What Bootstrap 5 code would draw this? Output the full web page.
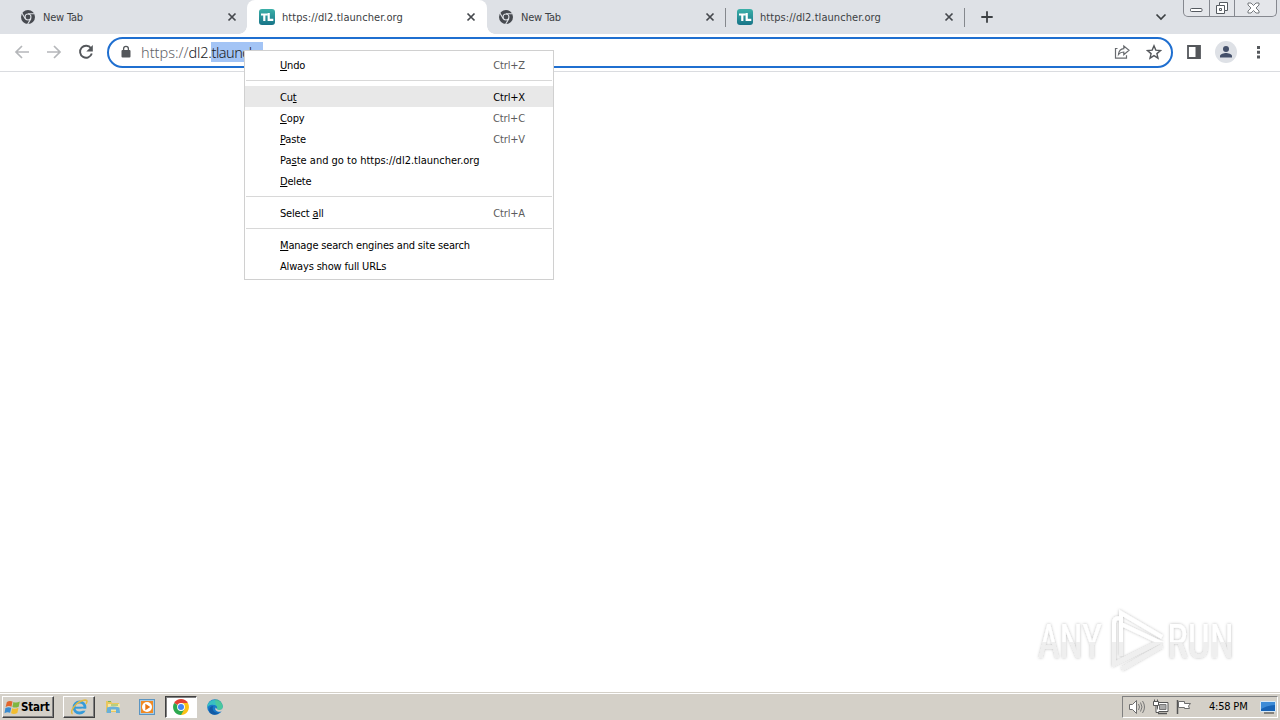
<!DOCTYPE html>
<html lang="en">
<head>
    <meta charset="UTF-8">
    <meta name="viewport" content="width=device-width, initial-scale=1.0">
    <title>https://dl2.tlauncher.org</title>
    <link rel="stylesheet" href="https://cdn.jsdelivr.net/npm/bootstrap@5.3.0/dist/css/bootstrap.min.css">
    <style>
        body {
            font-family: "DejaVu Sans Condensed", "DejaVu Sans", sans-serif;
            font-stretch: condensed;
            font-size: 11px;
            line-height: 14px;
            color: #202124;
        }
        svg { display: block; flex: none; }

        /* tab strip */
        .tabstrip { height: 34px; background: #dee1e6; padding-left: 8px; }
        .tab-item { width: 239px; height: 34px; padding: 0 9px 0 12px; color: #3c4043; flex: none; }
        .tab-item.wide { width: 240px; padding-right: 10px; }
        .tab-item.narrow { width: 238px; padding: 0 9px 0 11px; }
        .tab-item .tab-title { margin-left: 7px; padding-top: 2px; letter-spacing: -.2px; }
        .tab-item .tab-url { letter-spacing: .06px; }
        .tab-item.current { background: #fff; border-radius: 8px 8px 0 0; position: relative; }
        .tab-item.current::before, .tab-item.current::after {
            content: ""; position: absolute; bottom: 0; width: 8px; height: 8px;
        }
        .tab-item.current::before { left: -8px; background: radial-gradient(circle at 0 0, transparent 7.5px, #fff 8px); }
        .tab-item.current::after { right: -8px; background: radial-gradient(circle at 100% 0, transparent 7.5px, #fff 8px); }
        .tab-line { width: 1px; height: 19px; background: #85888d; }
        .win-buttons { width: 94px; height: 17px; border: 1px solid #85888f; border-top: 0; border-radius: 0 0 5px 5px; background: #e4e6ea; margin-right: 3px; }
        .win-buttons > div + div { border-left: 1px solid #85888f; }
        .win-min, .win-max { width: 25px; }

        /* toolbar */
        .toolbar { height: 38px; border-bottom: 1px solid #dadce0; padding: 0 13px 2px 13px; }
        .nav-gap { margin-left: 14px; }
        .omnibox { height: 31px; border: 2px solid #1f6fd0; border-radius: 16px; margin: 2px 0 0 12px; padding: 0 9px 2px 10px; width: 1066px; }
        .url { font-family: "Noto Sans", sans-serif; font-stretch: normal; font-weight: 300; font-size: 14.5px; line-height: 20px; margin-left: 8px; color: #5f6368; }
        .url-host { color: #202124; letter-spacing: -.25px; }
        .url-sel { width: 52px; height: 20px; background: #a3c4f5; color: #202124; letter-spacing: -.5px; }
        .avatar { width: 22px; height: 22px; background: #dee1e6; }

        /* context menu */
        .ctx { position: absolute; left: 244px; top: 50px; width: 310px; border: 1px solid #d0d0d0; background: #fff; padding: 3px 0; color: #000; }
        .ctx-row { height: 21px; padding: 2px 28px 0 35px; }
        .ctx-row kbd { all: unset; color: #5c5c5c; letter-spacing: -.15px; }
        .ctx-row span { letter-spacing: -.17px; }
        .ctx-row .ctx-url { letter-spacing: 0; }
        .ctx-row.hot { background: #e8e8e8; }
        .ctx-row.hot kbd { color: #000; }
        .ctx-line { height: 1px; background: #d8d8d8; margin: 5px 1px; }
        .ctx u { text-underline-offset: 1px; text-decoration-thickness: 1px; }

        .watermark { position: absolute; left: 1030px; top: 602px; }
        .watermark text { font-family: Roboto, "Liberation Sans", sans-serif; font-size: 49px; font-weight: 400; }

        /* taskbar */
        .taskbar { height: 28px; background: #d4d0c8; border-top: 1px solid #d4d0c8; box-shadow: inset 0 1px 0 #fff; padding: 2px 2px 2px 2px; }
        .raised { border: 1px solid; border-color: #fff #404040 #404040 #fff; box-shadow: inset -1px -1px 0 #808080; }
        .pressed { border: 1px solid; border-color: #404040 #fff #fff #404040; box-shadow: inset 1px 1px 0 #808080; background: #fff; }
        .start-btn { width: 52px; height: 22px; padding-left: 1px; font-size: 11.5px; color: #000; letter-spacing: -.2px; }
        .task-btn { width: 32px; height: 22px; }
        .tray { width: 156px; height: 22px; border: 1px solid; border-color: #808080 #fff #fff #808080; padding: 0 1px 0 5px; color: #000; }
        .clock { letter-spacing: -.2px; margin-left: 17px; }
    </style>
</head>
<body class="bg-white overflow-hidden">
    <svg width="0" height="0" class="position-absolute">
        <defs>
            <symbol id="chrome-gray" viewBox="0 0 16 16">
                <circle cx="8" cy="8" r="7" fill="#474a50"/>
                <circle cx="8" cy="8" r="3.5" fill="#dee1e6"/>
                <circle cx="8" cy="8" r="2.4" fill="#474a50"/>
                <path d="M8 4.7h6.6M5.1 9.6 1.9 4M10.9 9.6 7.6 15.2" stroke="#dee1e6" stroke-width="1.1"/>
            </symbol>
            <linearGradient id="teal" x2="0" y2="1"><stop stop-color="#3bb0a8"/><stop offset="1" stop-color="#177488"/></linearGradient>
            <symbol id="tl" viewBox="0 0 16 16">
                <rect width="16" height="16" rx="3" fill="url(#teal)"/>
                <path d="M2 5.5h6.5M5.3 5v7M9.7 4v6.8h4.6" fill="none" stroke="#fff" stroke-width="2.2"/>
            </symbol>
            <symbol id="close" viewBox="0 0 10 10">
                <path d="m1.500 1.500 7 7m0-7-7 7" stroke="#45484d" stroke-width="1.700"/>
            </symbol>
        </defs>
    </svg>

    <div class="vh-100 d-flex flex-column">
        <div class="tabstrip d-flex align-items-center">
            <div class="tab-item d-flex align-items-center">
                <svg width="16" height="16"><use href="#chrome-gray"/></svg>
                <span class="tab-title">New Tab</span>
                <svg class="ms-auto" width="12" height="10"><use href="#close"/></svg>
            </div>
            <div class="tab-item wide current d-flex align-items-center">
                <svg width="16" height="16"><use href="#tl"/></svg>
                <span class="tab-title tab-url">https://dl2.tlauncher.org</span>
                <svg class="ms-auto" width="12" height="10"><use href="#close"/></svg>
            </div>
            <div class="tab-item narrow d-flex align-items-center">
                <svg width="16" height="16"><use href="#chrome-gray"/></svg>
                <span class="tab-title">New Tab</span>
                <svg class="ms-auto" width="12" height="10"><use href="#close"/></svg>
            </div>
            <div class="tab-line"></div>
            <div class="tab-item narrow d-flex align-items-center">
                <svg width="16" height="16"><use href="#tl"/></svg>
                <span class="tab-title tab-url">https://dl2.tlauncher.org</span>
                <svg class="ms-auto" width="12" height="10"><use href="#close"/></svg>
            </div>
            <div class="tab-line"></div>
            <svg class="ms-3" width="12" height="12" viewBox="0 0 12 12"><path d="M6 .3v11.4M.3 6h11.4" stroke="#3c4043" stroke-width="1.8"/></svg>
            <svg class="ms-auto me-3" width="12" height="8" viewBox="0 0 12 8"><path d="m1.500 1.500 4.500 4.500 4.500-4.500" fill="none" stroke="#3c4043" stroke-width="1.700"/></svg>
            <div class="win-buttons d-flex align-self-start">
                <div class="win-min d-flex justify-content-center align-items-end pb-1">
                    <svg width="13" height="4" viewBox="0 0 13 4"><rect x=".5" y=".5" width="11.5" height="3" rx="1" fill="#fff" stroke="#555a60"/></svg>
                </div>
                <div class="win-max d-flex justify-content-center align-items-center">
                    <svg width="14" height="14" viewBox="0 0 14 14"><path d="M4.500 1.500h8v8h-3v3h-8v-8h3z" fill="#fff" stroke="#555a60"/><path d="M4.500 4.500h5v5M4.500 7.500h2v2h-2z" fill="none" stroke="#555a60"/></svg>
                </div>
                <div class="flex-grow-1 d-flex justify-content-center align-items-center pe-1">
                    <svg width="13" height="12" viewBox="0 0 13 12"><path d="M1 1h3l2.500 2.500L9 1h3v2L9 6l3 3v2H9L6.500 8.500 4 11H1V9l3-3-3-3z" fill="#fff" stroke="#666b70" stroke-width=".9"/></svg>
                </div>
            </div>
        </div>

        <div class="toolbar d-flex align-items-center">
            <svg width="18" height="16" viewBox="0 0 18 16"><path d="M16 8H3m6-6L3 8l6 6" fill="none" stroke="#b5b7ba" stroke-width="1.700"/></svg>
            <svg class="nav-gap" width="18" height="16" viewBox="0 0 18 16"><path d="M2 8h13M9 2l6 6-6 6" fill="none" stroke="#b5b7ba" stroke-width="1.700"/></svg>
            <svg class="nav-gap" width="18" height="16" viewBox="0 0 18 16"><path d="M14 4.300A6 6 0 1 0 14.800 9.500" fill="none" stroke="#54575b" stroke-width="1.900"/><path d="M15.800 1v6.500H9.300z" fill="#54575b"/></svg>
            <div class="omnibox d-flex align-items-center">
                <svg width="14" height="14" viewBox="0 0 14 14"><rect x="2.500" y="5" width="9" height="7.500" rx="1" fill="#54575b"/><path d="M4.600 5.500V3.800a2.400 2.400 0 0 1 4.800 0v1.700" fill="none" stroke="#54575b" stroke-width="1.300"/></svg>
                <div class="url d-flex">
                    <span>https://</span><span class="url-host">dl2.</span><span class="url-sel">tlaunche</span>
                </div>
                <svg class="ms-auto" width="16" height="16" viewBox="0 0 16 16"><path d="M3.500 4.500h-2v9.700h11v-3" fill="none" stroke="#686b6f" stroke-width="1.200"/><path d="M9.800 2v2.700C6.500 5 4.800 7.500 4.500 10.500 6 8.500 7.500 8 9.800 8v2.700L15 6.300z" fill="none" stroke="#686b6f" stroke-width="1.200"/></svg>
                <svg class="ms-3" width="16" height="16" viewBox="0 0 16 16"><path d="m8 1.800 1.800 4.300 4.700.4-3.600 3.100 1.100 4.600L8 11.700l-4 2.500 1.100-4.600-3.600-3.100 4.700-.4z" fill="none" stroke="#54575b" stroke-width="1.400"/></svg>
            </div>
            <svg class="nav-gap" width="14" height="14" viewBox="0 0 14 14"><path d="M1 1h12v12H1z" fill="#fff" stroke="#54575b" stroke-width="1.800"/><path d="M8.500 1H13v12H8.500z" fill="#54575b"/></svg>
            <div class="avatar nav-gap rounded-circle d-flex justify-content-center align-items-center">
                <svg width="14" height="14" viewBox="0 0 14 14"><circle cx="7" cy="4" r="3" fill="#44506a"/><path d="M1 12.500V11c0-2 4-3 6-3s6 1 6 3v1.500z" fill="#44506a"/></svg>
            </div>
            <svg class="ms-auto" width="18" height="16" viewBox="0 0 18 16"><path d="M8 2h3v3H8zM8 6.700h3v3H8zM8 11.400h3v3H8z" fill="#54575b"/></svg>
        </div>

        <div class="flex-grow-1"></div>

        <div class="taskbar d-flex align-items-center">
            <div class="start-btn raised d-flex align-items-center fw-bold">
                <svg width="17" height="18" viewBox="0 0 15 16"><path d="M2.500 3.500Q5 2 7.500 3.200L6.600 7.700Q4 6.500 1.400 8z" fill="#e2652b"/><path d="M8.300 3.500q2.500 1.200 5.700-.3L13 7.700q-3 1.500-5.600.3z" fill="#7fb640"/><path d="M1.200 8.900q2.600-1.400 5.200-.3l-1 4.600q-2.500-1.200-5 .3z" fill="#398bd0"/><path d="M7.200 9q2.700 1.200 5.600-.3l-1 4.700q-3 1.400-5.600.2z" fill="#f2bd30"/></svg>
                <span>Start</span>
            </div>
            <div class="task-btn raised d-flex justify-content-center align-items-center" style="margin-left: 9px">
                <svg width="18" height="18" viewBox="0 0 18 18"><circle cx="9.500" cy="9.500" r="5.500" fill="none" stroke="#369bd9" stroke-width="2.800"/><path d="M5 9.700h9.500" stroke="#369bd9" stroke-width="2"/><path d="M11.500 11.700h5" stroke="#d4d0c8" stroke-width="2"/><path d="M2.500 16C-1 14 6 3 15 2c3 0 2 2 1 4" fill="none" stroke="#e3ba42" stroke-width="1.500"/></svg>
            </div>
            <svg style="margin-left: 10px" width="16" height="16" viewBox="0 0 16 16"><path d="M1 2h5l1 2h7v9H1z" fill="#e9c75e"/><path d="M3 5h12v7H3z" fill="#f7e7a5"/><path d="M2 8.500q6-2 12.500 0L15 14h-4v-3.500H6V14H1.500z" fill="#68b0d9"/><path d="M3 2.500h3M6 6h7" stroke="#76b65a"/></svg>
            <svg style="margin-left: 18px" width="16" height="16" viewBox="0 0 16 16"><rect x=".5" y=".5" width="15" height="15" fill="#a7cbe5" stroke="#5b95c2"/><rect x="2" y="2" width="12" height="12" fill="#f08a24"/><circle cx="8" cy="8" r="5" fill="#fff"/><path d="m6.300 4.800 5 3.200-5 3.200z" fill="#e87513"/></svg>
            <div class="task-btn pressed d-flex justify-content-center align-items-center" style="margin-left: 10px">
                <svg width="16" height="16" viewBox="0 0 16 16"><path d="M8 8 1.100 4A8 8 0 0 1 14.900 4z" fill="#e34133"/><path d="M8 8V4h6.900A8 8 0 0 1 8 16z" fill="#fbc116"/><path d="m8 8 3.500 2L8 16A8 8 0 0 1 1.100 4z" fill="#2da94f"/><circle cx="8" cy="8" r="3.900" fill="#fff"/><circle cx="8" cy="8" r="3" fill="#4285f4"/></svg>
            </div>
            <svg style="margin-left: 10px" width="16" height="16" viewBox="0 0 16 16"><circle cx="8" cy="8" r="7.800" fill="#1879c9"/><path d="M.5 6A8 8 0 0 1 15.800 8c0 3-4 4-6 2 1-1.500 0-4-3-4C4 5.500 1.500 6 .3 9z" fill="#38bfc2"/><path d="M8 .2c5 0 8 4 7.800 7.800 0 3-4 4-6 2 1-1.500 0-3-1-4z" fill="#55cc8a" opacity=".65"/><path d="M6.500 7C4.500 9 6 14 12 13.800 9 17 4 16 2.500 13 1.500 10 3 7 6.500 7z" fill="#125aa5"/><path d="M9.800 10c2 2 6 .8 6-2l.2 3c-1 2-5 2.500-7 .5-1-1-.8-2-.2-3z" fill="#d4d0c8"/></svg>

            <div class="tray ms-auto d-flex align-items-center">
                <svg width="18" height="16" viewBox="0 0 18 16"><path d="M1.500 5.500h3l4-4v13l-4-4h-3z" fill="#fff" stroke="#6d6d6d"/><path d="M10.500 5q2 3 0 6M12.500 3.500q3 4.500 0 9M14.500 2q4 6 0 12" fill="none" stroke="#777"/></svg>
                <svg style="margin-left: 6px" width="17" height="16" viewBox="0 0 17 16"><path d="M5.500 3.500h10.500v9H5.500z" fill="#fff" stroke="#555"/><path d="M7.500 5.500h6.500v5H7.500z" fill="#aaa" stroke="#777"/><path d="M6 14.500h9" stroke="#555" stroke-width="1.500"/><path d="M1.500 2.500h5v4h-5zM2.500.5v2m3-2v2M4 7v6.500h3" fill="#fff" stroke="#555"/></svg>
                <svg style="margin-left: 7px" width="16" height="16" viewBox="0 0 16 16"><path d="M1.500 1v14" stroke="#555" stroke-width="1.500"/><path d="M2.500 2.500h6v2h6l-2 2.500 1 2.500h-5v-1h-6z" fill="#fff" stroke="#6d6d6d"/></svg>
                <span class="clock">4:58 PM</span>
                <svg class="ms-auto" width="16" height="14" viewBox="0 0 16 14"><path d="M.5 1.500h15v10H.5z" fill="#1763b6" stroke="#d7e8f5"/><path d="M1 2h14v3q-7 0-14 4z" fill="#3c8bd7"/><path d="M4 13h10" stroke="#333"/></svg>
            </div>
        </div>
    </div>

    <div class="watermark">
        <svg width="240" height="76" viewBox="0 0 240 76">
            <defs>
                <linearGradient id="wm" gradientUnits="userSpaceOnUse" x1="0" y1="0" x2="0" y2="76">
                    <stop offset=".52" stop-color="#fff"/><stop offset=".52" stop-color="#efefef"/>
                </linearGradient>
                <filter id="wm-glow" x="-10%" y="-20%" width="120%" height="140%"><feDropShadow dx="0" dy="0" stdDeviation="1.500" flood-color="#000" flood-opacity=".28"/></filter>
            </defs>
            <g filter="url(#wm-glow)" fill="url(#wm)">
                <text x="8" y="56" textLength="64" lengthAdjust="spacingAndGlyphs">ANY</text>
                <text x="137" y="56" textLength="67" lengthAdjust="spacingAndGlyphs">RUN</text>
                <path d="M91 54V11l41 24M91 22l38 18L84 62V21q0-5 5-5M92 67l40-23" fill="none" stroke="url(#wm)" stroke-width="4"/>
            </g>
        </svg>
    </div>

    <div class="ctx">
        <div class="ctx-row d-flex justify-content-between align-items-center"><span><u>U</u>ndo</span><kbd>Ctrl+Z</kbd></div>
        <div class="ctx-line"></div>
        <div class="ctx-row hot d-flex justify-content-between align-items-center"><span>Cu<u>t</u></span><kbd>Ctrl+X</kbd></div>
        <div class="ctx-row d-flex justify-content-between align-items-center"><span><u>C</u>opy</span><kbd>Ctrl+C</kbd></div>
        <div class="ctx-row d-flex justify-content-between align-items-center"><span><u>P</u>aste</span><kbd>Ctrl+V</kbd></div>
        <div class="ctx-row d-flex align-items-center"><span class="ctx-url">Pa<u>s</u>te and go to https://dl2.tlauncher.org</span></div>
        <div class="ctx-row d-flex align-items-center"><span><u>D</u>elete</span></div>
        <div class="ctx-line"></div>
        <div class="ctx-row d-flex justify-content-between align-items-center"><span>Select <u>a</u>ll</span><kbd>Ctrl+A</kbd></div>
        <div class="ctx-line"></div>
        <div class="ctx-row d-flex align-items-center"><span><u>M</u>anage search engines and site search</span></div>
        <div class="ctx-row d-flex align-items-center"><span>Always show full URLs</span></div>
    </div>

    <script src="https://cdn.jsdelivr.net/npm/bootstrap@5.3.0/dist/js/bootstrap.bundle.min.js"></script>
</body>
</html>
